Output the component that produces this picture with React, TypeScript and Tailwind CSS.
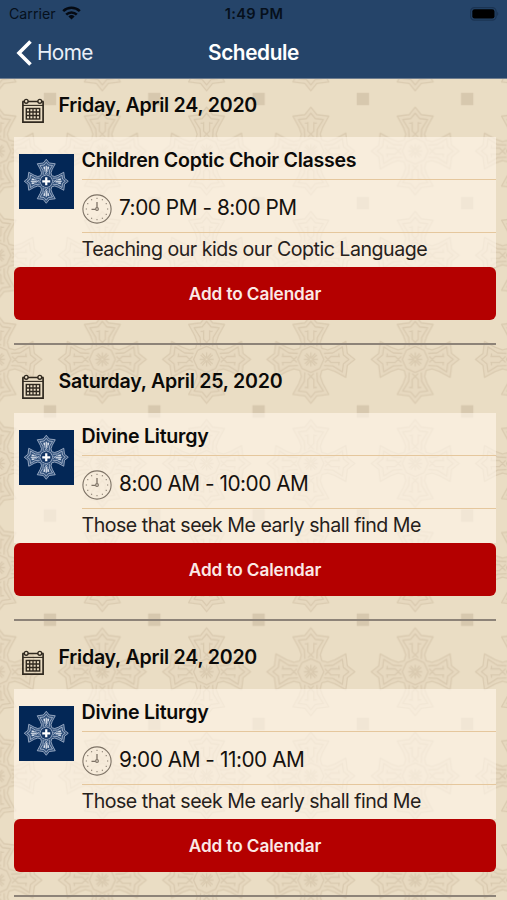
import React from "react";

const ARM_OUTER = "M-11 -11 L-9.5 -17 L-12 -24 L-18 -35 L-6 -36.5 L0 -44 L6 -36.5 L18 -35 L12 -24 L9.5 -17 L11 -11";
const ARM_INNER = "M-6 -13 L-6.5 -22 L-12.5 -31.5 L-4.5 -32.5 L0 -38 L4.5 -32.5 L12.5 -31.5 L6.5 -22 L6 -13";
const ARM_DETAIL = "M-3 -29 V-20 L3 -14 M3 -29 V-20 L-3 -14 M-6 -28 H-3 M3 -28 H6";
const TURNS = [0, 90, 180, 270];

function Cross() {
  return (
    <g fill="none" strokeLinejoin="round">
      {TURNS.map((turn) => (
        <g key={turn} transform={`rotate(${turn})`}>
          <path d={ARM_OUTER} />
          <path d={ARM_INNER} />
          <path d={ARM_DETAIL} />
          <path d="M-9 -9 L0 -13 L9 -9 M0 -1 V-7 M0 -1 L-4.5 -6 M0 -1 L4.5 -6" />
        </g>
      ))}
    </g>
  );
}

function CrossFill() {
  return (
    <g stroke="none">
      <rect x="-11" y="-11" width="22" height="22" />
      {TURNS.map((turn) => (
        <path key={turn} d={ARM_OUTER} transform={`rotate(${turn})`} />
      ))}
    </g>
  );
}

function Backdrop() {
  return (
    <svg className="absolute inset-0 h-full w-full" aria-hidden="true">
      <defs>
        <pattern id="crosses" x="50" y="99" width="104.3" height="104.15" patternUnits="userSpaceOnUse">
          <g transform="translate(52.3 52.1)" stroke="#baa788" strokeOpacity=".3" strokeWidth="1.3">
            <g fill="#b8a788" fillOpacity=".08">
              <CrossFill />
            </g>
            <Cross />
          </g>
          <g fill="#d7c8ae">
            <rect x="-6.2" y="-6.2" width="12.4" height="12.4" />
            <rect x="98.1" y="-6.2" width="12.4" height="12.4" />
            <rect x="-6.2" y="97.95" width="12.4" height="12.4" />
            <rect x="98.1" y="97.95" width="12.4" height="12.4" />
          </g>
        </pattern>
      </defs>
      <rect width="100%" height="100%" fill="url(#crosses)" />
    </svg>
  );
}

function CalendarIcon() {
  return (
    <svg className="mt-[19px] ml-[0.5px] h-[26px] w-6 shrink-0" viewBox="0 0 24 26" fill="none" stroke="#30291f">
      <path d="M1.9 3.5 V24.2 H22.1 V3.5 M1.3 3.5 H3 M7 3.5 H17 M21 3.5 H22.7" strokeWidth="1.7" />
      <path d="M2 7.4 H22" strokeWidth="1.1" />
      <circle cx="5.2" cy="3.3" r="1.9" strokeWidth="1.4" />
      <circle cx="18.8" cy="3.3" r="1.9" strokeWidth="1.4" />
      <rect x="5.3" y="10.5" width="13.4" height="10.5" strokeWidth="1.4" />
      <path d="M8.7 10.5 V21 M12 10.5 V21 M15.3 10.5 V21 M5.3 14 H18.7 M5.3 17.5 H18.7" strokeWidth="1.3" />
    </svg>
  );
}

function ClockIcon() {
  return (
    <svg className="h-[30px] w-[30px] shrink-0" viewBox="-15 -15 30 30" fill="none" stroke="#7d7265">
      <circle r="14.1" strokeWidth="1.1" />
      <path d="M0 -7 V-1.5 M-5.5 .3 H-1.5" strokeWidth="1.3" />
      <circle r="1.4" strokeWidth="1.1" />
      {[0, 30, 60, 90, 120, 150, 180, 210, 240, 270, 300, 330].map((a) => (
        <path key={a} d="M0 -11.2 V-10.1" strokeWidth="1" transform={`rotate(${a})`} />
      ))}
    </svg>
  );
}

function Logo() {
  return (
    <svg className="mt-[17px] ml-[5px] h-[54.5px] w-[54.5px] shrink-0 bg-[#032756]" viewBox="-54.5 -54.5 109 109">
      <g fill="#8ba2c4" fillOpacity=".35">
        <CrossFill />
      </g>
      <g stroke="#b9c6da" strokeWidth="2" strokeOpacity=".75">
        <Cross />
      </g>
      <circle r="11" fill="#163765" />
      <path d="M0 -8 V8 M-8 0 H8" stroke="#fff" strokeWidth="4.5" />
      {TURNS.map((turn) => (
        <path key={turn} d="M0 -31 V-19 M-4 -29 V-24 M4 -29 V-24" stroke="#eef2f8" strokeWidth="2.2" transform={`rotate(${turn})`} />
      ))}
    </svg>
  );
}

type Entry = { date: string; title: string; time: string; note: string; timeCls: string };

const LITURGY = {
  title: "Divine Liturgy",
  note: "Those that seek Me early shall find Me",
};

const ENTRIES: Entry[] = [
  {
    date: "Friday, April 24, 2020",
    title: "Children Coptic Choir Classes",
    time: "7:00 PM - 8:00 PM",
    note: "Teaching our kids our Coptic Language",
    timeCls: "tracking-[-0.46px]",
  },
  { ...LITURGY, date: "Saturday, April 25, 2020", time: "8:00 AM - 10:00 AM", timeCls: "tracking-[-0.49px]" },
  { ...LITURGY, date: "Friday, April 24, 2020", time: "9:00 AM - 11:00 AM", timeCls: "tracking-[-0.45px]" },
];

function EventItem({ entry }: { entry: Entry }) {
  return (
    <section className="h-[276px] pr-[11px] pl-[14px]">
      <div className="flex h-[58px] pl-1.5">
        <CalendarIcon />
        <h2 className="ml-[14px] pt-[12px] text-[19.6px] leading-7 font-semibold tracking-[-0.24px] whitespace-nowrap">{entry.date}</h2>
      </div>
      <div className="flex h-[130px] bg-[#fff6ea]/65">
        <Logo />
        <div className="ml-[8px] flex-1 whitespace-nowrap">
          <div className="h-[43px] border-b-[1.5px] border-[#e5c79d] pt-[9px]">
            <h3 className="text-[19.6px] leading-7 font-semibold tracking-[-0.27px]">{entry.title}</h3>
          </div>
          <div className="flex h-[53px] items-center border-b-[1.5px] border-[#e5c79d] pt-[6px]">
            <ClockIcon />
            <span className={`-mt-[3px] ml-[7.5px] text-[20.8px] leading-7 text-[#16120e] ${entry.timeCls}`}>{entry.time}</span>
          </div>
          <p className="pt-[2px] text-[19.6px] leading-7 tracking-[-0.49px] text-[#26211b]">{entry.note}</p>
        </div>
      </div>
      <button className="block h-[53px] w-full rounded-[6px] bg-[#b40000] text-[17.2px] font-semibold tracking-[-0.1px] text-[#fbe9e6]">Add to Calendar</button>
      <div className="mt-[23px] h-[1.5px] bg-[#8d8378]" />
    </section>
  );
}

export default function App() {
  return (
    <div className="relative h-[900px] w-[507px] overflow-hidden bg-[#eaddc4] text-[#0b0a08] [font-family:Inter,'Liberation_Sans',sans-serif]">
      <Backdrop />
      <div className="relative">
        <header className="h-[79px] border-b border-[#6f7d8e] bg-[#254469]">
          <div className="grid h-[27px] grid-cols-3 items-center pr-2 pl-[9px] text-[14.2px] text-[#06101c]">
            <div className="flex items-center gap-[6px]">
              <span>Carrier</span>
              <svg className="h-[14px] w-[19px]" viewBox="0 0 19 14" fill="none" stroke="#050a12" strokeWidth="2.6">
                <path d="M1.2 5.1 A12 12 0 0 1 17.8 5.1" />
                <path d="M4.2 8.6 A7.6 7.6 0 0 1 14.8 8.6" />
                <path d="M9.5 13.6 L6.4 10.5 A4.5 4.5 0 0 1 12.6 10.5 Z" fill="#050a12" stroke="none" />
              </svg>
            </div>
            <span className="pt-0.5 text-center text-[14.6px] font-semibold tracking-[0.3px]">1:49 PM</span>
            <svg className="h-[14px] w-[29px] justify-self-end" viewBox="0 0 29 14">
              <rect x=".6" y=".6" width="25.5" height="12.5" rx="3.8" fill="none" stroke="#1b3453" strokeWidth="1.2" />
              <rect x="2.3" y="2.3" width="22.2" height="9.2" rx="2.3" fill="#000" />
              <path d="M27.2 4.8 Q29.4 6.9 27.2 9Z" fill="#1b3453" />
            </svg>
          </div>
          <div className="grid h-[51px] grid-cols-3 items-center px-4">
            <div className="flex items-center gap-[5px] text-[20.8px] tracking-[-0.6px] text-[#e9eff8]">
              <svg className="h-[26px] w-4" viewBox="0 0 16 26" fill="none" stroke="#fff" strokeWidth="3.6">
                <path d="M14.5 1.5 L3 13 L14.5 24.5" />
              </svg>
              <span>Home</span>
            </div>
            <h1 className="text-center text-[20.8px] font-semibold tracking-[-0.4px] text-white">Schedule</h1>
          </div>
        </header>
        <main>
          {ENTRIES.map((entry, i) => (
            <EventItem key={i} entry={entry} />
          ))}
        </main>
      </div>
    </div>
  );
}
